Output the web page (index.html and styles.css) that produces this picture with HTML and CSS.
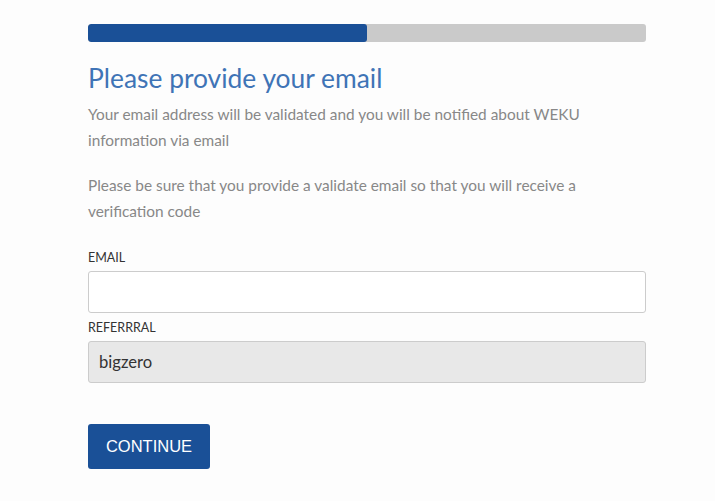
FILE: index.html
```html
<!DOCTYPE html>
<html>
<head>
<meta charset="utf-8">
<link rel="stylesheet" href="styles.css">
</head>
<body>
<main class="wrap">
  <div class="progress"><div class="progress-fill" style="width:50%"></div></div>
  <h1 class="title">Please provide your email</h1>
  <p class="text">Your email address will be validated and you will be notified about WEKU information via email</p>
  <p class="text">Please be sure that you provide a validate email so that you will receive a verification code</p>
  <label class="label" for="email">EMAIL</label>
  <input class="field" id="email" type="text">
  <label class="label label-ref" for="ref">REFERRRAL</label>
  <input class="field field-disabled" id="ref" type="text" value="bigzero" readonly>
  <button class="btn">CONTINUE</button>
</main>
</body>
</html>
```

FILE: styles.css
```css
html, body { margin: 0; padding: 0; background: #fdfdfd; }
.wrap {
  width: 558px;
  margin: 0 0 0 88px;
  padding-top: 24px;
  display: flex;
  flex-direction: column;
  font-family: "Lato", "Open Sans", sans-serif;
}
.progress {
  height: 18px;
  background: #cacaca;
  border-radius: 3px;
  overflow: hidden;
}
.progress-fill { height: 100%; background: #1a5097; border-radius: 3px; }
.title {
  margin: 20px 0 0;
  font-size: 26.4px;
  font-weight: 400;
  color: #3f74b6;
  line-height: 33px;
}
.text {
  margin: 6px 0 0;
  font-size: 15.4px;
  line-height: 26px;
  color: #888;
}
.text + .text { margin-top: 19px; }
.label {
  margin-top: 26px;
  font-size: 12.5px;
  color: #333;
  line-height: 16px;
}
.label-ref { margin-top: 7px; }
.field {
  margin-top: 5px;
  height: 42px;
  box-sizing: border-box;
  border: 1px solid #ccc;
  border-radius: 3px;
  background: #fff;
  padding: 0 10px;
  font-family: "Lato", sans-serif;
  font-size: 16.6px;
  color: #333;
}
.field-disabled { background: #e8e8e8; }
.btn {
  margin-top: 41px;
  align-self: flex-start;
  width: 122px;
  height: 45px;
  background: #1a5097;
  color: #fff;
  border: 0;
  border-radius: 3px;
  font-family: "Liberation Sans", Arial, sans-serif;
  font-size: 16.5px;
}
```
